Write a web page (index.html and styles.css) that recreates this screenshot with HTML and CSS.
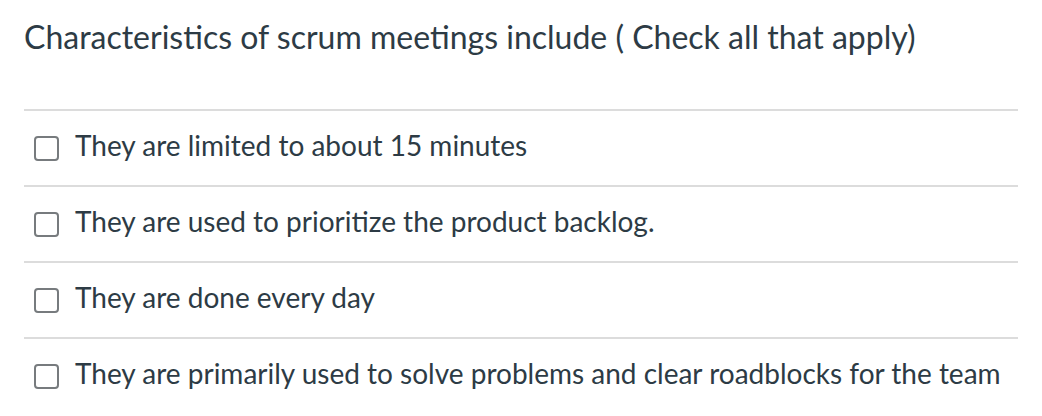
FILE: index.html
```html
<!DOCTYPE html>
<html>
<head>
<meta charset="utf-8">
<link rel="stylesheet" href="styles.css">
</head>
<body>
<div class="question">
  <div class="question-text">Characteristics of scrum meetings include ( Check all that apply)</div>
  <div class="answers">
    <label class="answer"><span class="box"></span><span class="label">They are limited to about 15 minutes</span></label>
    <label class="answer"><span class="box"></span><span class="label">They are used to prioritize the product backlog.</span></label>
    <label class="answer"><span class="box"></span><span class="label">They are done every day</span></label>
    <label class="answer"><span class="box"></span><span class="label">They are primarily used to solve problems and clear roadblocks for the team</span></label>
  </div>
</div>
</body>
</html>
```
FILE: styles.css
```css
html, body {
  margin: 0;
  padding: 0;
  background: #ffffff;
}
body {
  font-family: Lato, "Open Sans", sans-serif;
  color: #2d3b45;
}
.question {
  padding: 0 24px;
}
.question-text {
  font-size: 32px;
  line-height: 36px;
  padding-top: 19px;
  height: 109px;
  box-sizing: border-box;
}
.answer {
  display: flex;
  align-items: center;
  height: 76px;
  box-sizing: border-box;
  border-top: 2px solid #dcdcdc;
  padding-left: 10px;
  font-size: 28px;
}
.box {
  width: 25px;
  height: 25px;
  border: 2px solid #777b7e;
  border-radius: 4px;
  flex: none;
  margin-right: 16px;
  box-sizing: border-box;
}
.label {
  line-height: 32px;
  padding-bottom: 6px;
}
```
